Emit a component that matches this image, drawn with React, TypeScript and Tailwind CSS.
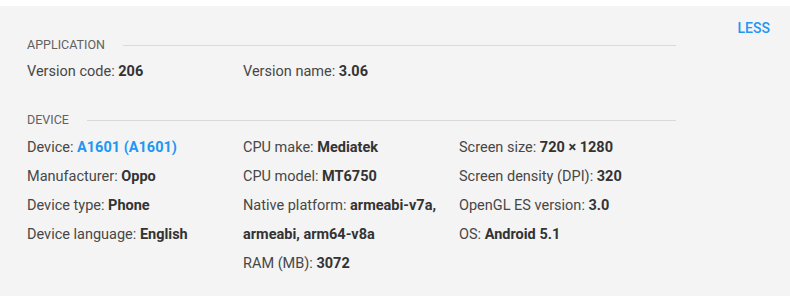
const application: [string, React.ReactNode][][] = [
	[["Version code", "206"]],
	[["Version name", "3.06"]],
];

function Row({ label, value }: { label: string; value: React.ReactNode }) {
	return (
		<div className="leading-[29px] whitespace-nowrap">
			{label}: <span className="font-bold text-[#333]">{value}</span>
		</div>
	);
}

function SectionHeader({ title, gap }: { title: string; gap: string }) {
	return (
		<div className={`flex items-center h-[20px] ${gap}`}>
			<span className="text-[12.5px] uppercase text-[#616161]">{title}</span>
			<div className="flex-1 ml-[18px] h-px bg-[#dadada]" />
		</div>
	);
}

export default function App() {
	return (
		<div
			className="w-[790px] h-[296px] bg-white pt-[6px]"
			style={{ fontFamily: "Roboto, 'Liberation Sans', sans-serif" }}
		>
			<div className="h-[290px] bg-[#f4f4f4] flex text-[14.5px] text-[#474747]">
				<div className="w-[676px] pl-[27px] pt-[29px]">
					<SectionHeader title="Application" gap="mb-[2px]" />
					<div className="grid grid-cols-[216px_216px_216px]">
						{application.map((col, i) => (
							<div key={i}>
								{col.map(([l, v]) => (
									<Row key={l} label={l} value={v} />
								))}
							</div>
						))}
					</div>

					<div className="mt-[24px]">
						<SectionHeader title="Device" gap="mb-[3px]" />
						<div className="grid grid-cols-[216px_216px_216px]">
							<div>
								<Row
									label="Device"
									value={<span className="text-[#2196f3]">A1601 (A1601)</span>}
								/>
								<Row label="Manufacturer" value="Oppo" />
								<Row label="Device type" value="Phone" />
								<Row label="Device language" value="English" />
							</div>
							<div>
								<Row label="CPU make" value="Mediatek" />
								<Row label="CPU model" value="MT6750" />
								<div className="leading-[29px] whitespace-nowrap">
									Native platform:{" "}
									<span className="font-bold text-[#333]">armeabi-v7a,</span>
								</div>
								<div className="leading-[29px] font-bold text-[#333]">
									armeabi, arm64-v8a
								</div>
								<Row label="RAM (MB)" value="3072" />
							</div>
							<div>
								<Row label="Screen size" value="720 × 1280" />
								<Row label="Screen density (DPI)" value="320" />
								<Row label="OpenGL ES version" value="3.0" />
								<Row label="OS" value="Android 5.1" />
							</div>
						</div>
					</div>
				</div>
				<div className="flex-1 flex justify-end pr-[20px] pt-[14px]">
					<button
						type="button"
						className="h-[16px] text-[14px] leading-[16px] font-medium text-[#2196f3]"
					>
						LESS
					</button>
				</div>
			</div>
		</div>
	);
}
